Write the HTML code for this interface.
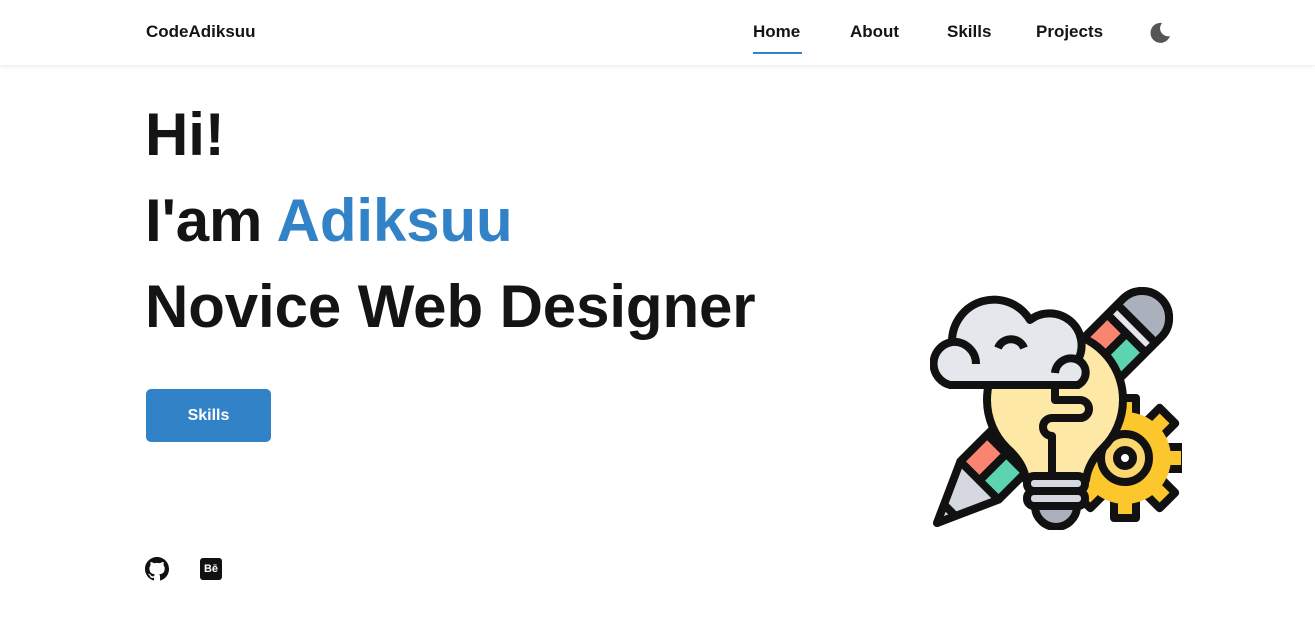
<!DOCTYPE html>
<html><head><meta charset="utf-8"><style>
*{margin:0;padding:0;box-sizing:border-box}
body{width:1315px;height:627px;background:#fff;font-family:"Liberation Sans",sans-serif;color:#141414;position:relative;overflow:hidden}
header{position:absolute;left:0;top:0;width:1315px;height:65px;box-shadow:0 1px 4px rgba(0,0,0,.1);background:#fff}
.logo{position:absolute;left:146px;top:22px;font-size:17px;font-weight:bold}
.nav a{position:absolute;top:22px;font-size:17px;font-weight:bold;color:#141414;text-decoration:none}
.ul{position:absolute;left:753px;top:52px;width:49px;height:2px;background:#3282c8}
h1{position:absolute;left:145px;font-size:60px;font-weight:bold;letter-spacing:-0.1px;white-space:nowrap}
.btn{position:absolute;left:146px;top:389px;width:125px;height:53px;background:#3282c8;border-radius:5px;color:#fff;font-weight:bold;font-size:16px;text-align:center;line-height:53px}
</style></head><body>
<header>
<div class="logo">CodeAdiksuu</div>
<div class="nav"><a style="left:753px">Home</a><a style="left:850px">About</a><a style="left:947px">Skills</a><a style="left:1036px">Projects</a></div>
<div class="ul"></div>
<svg style="position:absolute;left:1149px;top:22px" width="22" height="22" viewBox="0 0 22 22"><path d="M13 1A10 10 0 1 0 21 14 8 8 0 0 1 13 1z" fill="#555"/></svg>
</header>
<h1 style="top:100px">Hi!</h1>
<h1 style="top:186px">I'am <span style="color:#3282c8">Adiksuu</span></h1>
<h1 style="top:272px">Novice Web Designer</h1>
<div class="btn">Skills</div>
<svg style="position:absolute;left:145px;top:557px" width="24" height="24" viewBox="0 0 16 16"><path fill="#111" d="M8 0C3.58 0 0 3.58 0 8c0 3.54 2.29 6.53 5.47 7.59.4.07.55-.17.55-.38v-1.34c-2.23.49-2.69-1.07-2.69-1.07-.36-.93-.89-1.17-.89-1.17-.73-.5.06-.49.06-.49.8.06 1.23.83 1.23.83.71 1.23 1.87.87 2.33.66.07-.52.28-.87.51-1.07-1.78-.2-3.64-.89-3.64-3.95 0-.87.31-1.59.82-2.15-.08-.2-.36-1.02.08-2.12 0 0 .67-.21 2.2.82a7.6 7.6 0 0 1 4 0c1.53-1.04 2.2-.82 2.2-.82.44 1.1.16 1.92.08 2.12.51.56.82 1.27.82 2.15 0 3.07-1.87 3.75-3.65 3.95.29.25.54.73.54 1.48v2.2c0 .21.15.46.55.38A8 8 0 0 0 16 8c0-4.42-3.58-8-8-8z"/></svg>
<div style="position:absolute;left:200px;top:558px;width:22px;height:22px;background:#111;border-radius:3px;color:#fff;font-size:11px;font-weight:bold;text-align:center;line-height:22px">Bē</div>
<svg style="position:absolute;left:930px;top:278px" width="252" height="252" viewBox="0 0 252 252">
<g stroke="#111" stroke-width="8" stroke-linejoin="round">
<g transform="translate(7 245) rotate(-45)">
<path d="M0 0 L60 -27 H290 A27 27 0 0 1 290 27 H60 Z" fill="#d5d8de"/>
<path d="M0 0 L18 -8 V8Z" fill="#d5d8de"/>
<rect x="60" y="-27" width="38" height="27" fill="#f98571"/>
<rect x="60" y="0" width="38" height="27" fill="#5dd4b0"/>
<rect x="232" y="-27" width="36" height="27" fill="#f98571"/>
<rect x="232" y="0" width="36" height="27" fill="#5dd4b0"/>
<rect x="268" y="-27" width="14" height="54" fill="#e4e7ec"/>
<path d="M282 -27 H290 A27 27 0 0 1 290 27 H282Z" fill="#aab1bd"/>
</g>
<g transform="translate(195 180)" fill="#fcc62d">
<rect x="-11" y="-60" width="22" height="24"/>
<rect x="-11" y="-60" width="22" height="24" transform="rotate(45)"/>
<rect x="-11" y="-60" width="22" height="24" transform="rotate(90)"/>
<rect x="-11" y="-60" width="22" height="24" transform="rotate(135)"/>
<rect x="-11" y="-60" width="22" height="24" transform="rotate(180)"/>
<rect x="-11" y="-60" width="22" height="24" transform="rotate(225)"/>
<rect x="-11" y="-60" width="22" height="24" transform="rotate(270)"/>
<rect x="-11" y="-60" width="22" height="24" transform="rotate(315)"/>
<circle r="46" stroke="none"/>
<circle r="24" fill="#fcd770"/>
<circle r="8" fill="#fff"/>
</g>
<path d="M77 170 A68 68 0 1 1 173 170 Q158 185 156 202 H96 Q94 185 77 170Z" fill="#fde8a6"/>
<path d="M125 95 V122 H150 A9 9 0 0 1 150 140 H122 A9 9 0 0 0 122 158 V202" fill="none"/>
<rect x="97" y="198" width="58" height="15" rx="7" fill="#d5d8de"/>
<rect x="97" y="213" width="58" height="15" rx="7" fill="#d5d8de"/>
<path d="M105 228 H147 A21 21 0 0 1 105 228Z" fill="#aab1bd"/>
<path d="M20 107 A22 22 0 0 1 22 64 A42 42 0 0 1 100 42 A32 32 0 0 1 148 82 A14 14 0 0 1 148 107Z" fill="#e4e7ec"/>
<path d="M68 70 A14 14 0 0 1 94 70 M22 64 A22 22 0 0 1 46 86 M125 95 A16 16 0 0 1 148 82" fill="none"/>
</g>
</svg>
</body></html>
